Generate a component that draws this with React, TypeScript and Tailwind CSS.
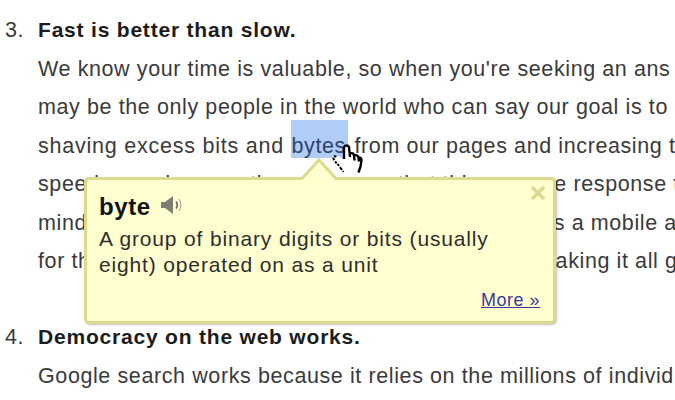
import React from 'react';

const FIRST_ITEM = [
  "We know your time is valuable, so when you're seeking an ans",
  'may be the only people in the world who can say our goal is to',
  null,
  'speed records many times over, so that this average response t',
  "mind with each new product we release, whether it's a mobile a",
  'for the modern web. And we continue working on making it all g',
];

const Line: React.FC<{ children: React.ReactNode }> = ({ children }) => (
  <p className="h-[38.4px] leading-[38.4px] whitespace-nowrap">{children}</p>
);

const Speaker = () => (
  <svg width="24" height="20" viewBox="0 0 24 20" className="ml-[9px] mt-[-3px]">
    <path d="M1 7h4l8-6v18l-8-6H1z" fill="#7d7d74" />
    <path d="M16 6.500c1.500 2 1.500 5 0 7" fill="none" stroke="#5f5f58" strokeWidth="1.500" />
    <path d="M19 4c2.500 3.500 2.500 8.500 0 12" fill="none" stroke="#a8a89c" strokeWidth="1.200" />
  </svg>
);

const HandCursor = () => (
  <svg width="32" height="32" viewBox="0 0 32 32" className="absolute left-[332px] top-[142px]">
    <path d="M12 17V5c1-2 4-2 5 0l1 6 4 1 4 2 3 2 1 3-1 5-2 6H12L2 15l4-1z" fill="#fff" />
    <path d="M2 14l3 1M1 16l4 6M5.500 22l3 4M8.500 26l3 4" stroke="#000" strokeWidth="2" strokeDasharray="2.500 1.500" fill="none" />
    <path
      d="M12 17V5c1-2 4-2 5 0l1 10M18 11.500c2-1 4 0 4 2l.5 5M22 13.500c2-1 4 0 4.500 2l.5 4M26.500 15.500c2 0 3 1 3 3l-1 6-2 6"
      stroke="#000"
      strokeWidth="2.400"
      fill="none"
    />
  </svg>
);

const Popup = () => (
  <div className="absolute left-[84px] top-[177px] w-[472px] h-[147px] rounded-[5px] border-[3px] border-[#dfd98d] bg-[#ffffcf] shadow-[1px_1px_2px_rgba(0,0,0,0.25)] text-[#2e2e2e]">
    <svg width="46" height="23" viewBox="0 0 46 23" className="absolute left-[209px] top-[-22px]">
      <path d="M6 20.500L23 2l17 18.500V23H6z" fill="#ffffcf" />
      <path d="M0 20.500h6L23 2l17 18.500h6" fill="none" stroke="#dfd98d" strokeWidth="3" />
    </svg>
    <div className="flex items-center pl-[12px] pt-[12px] h-[41px]">
      <span className="text-[24px] leading-[28px] font-bold text-[#111] tracking-[0.6px]">byte</span>
      <Speaker />
    </div>
    <p className="pl-[12px] mt-[5px] text-[21px] leading-[26px] tracking-[0.85px]">
      A group of binary digits or bits (usually
      <br />
      eight) operated on as a unit
    </p>
    <svg width="16" height="16" viewBox="0 0 16 16" className="absolute right-[7px] top-[5px]">
      <path d="M2 2l12 12M14 2L2 14" stroke="#dfd98d" strokeWidth="3.500" />
    </svg>
    <a className="absolute right-[13px] bottom-[11px] text-[18px] leading-[20px] tracking-[0.5px] text-[#3a3a9e] underline">
      More »
    </a>
  </div>
);

export default function App() {
  return (
    <div className="relative w-[675px] h-[400px] overflow-hidden bg-white font-['Liberation_Sans',Arial,sans-serif] text-[21.5px] text-[#3a3a3a] tracking-[0.6px]">
      <div className="flex pt-[11px]">
        <span className="w-[38px] pl-[5px] shrink-0 leading-[38.4px] tracking-[0.5px]">3.</span>
        <div>
          <p className="h-[39px] leading-[38.4px] text-[21px] font-bold text-[#1c1c1c] tracking-[0.8px]">Fast is better than slow.</p>
          {FIRST_ITEM.map((text, i) =>
            text === null ? (
              <Line key={i}>
                <span className="tracking-[0.77px]">shaving excess bits and</span> <span className="pl-[1px] pr-[2px] bg-[#b0cdf8] pt-[14px] pb-[0px] text-[#2f4468]">bytes</span> from our pages and increasing t
              </Line>
            ) : (
              <Line key={i}>{text}</Line>
            ),
          )}
        </div>
      </div>
      <div className="flex mt-[38px]">
        <span className="w-[38px] pl-[5px] shrink-0 leading-[38.4px] tracking-[0.5px]">4.</span>
        <div>
          <p className="h-[38.4px] leading-[38.4px] text-[21px] font-bold text-[#1c1c1c] tracking-[0.8px]">Democracy on the web works.</p>
          <Line>Google search works because it relies on the millions of individ</Line>
        </div>
      </div>
      <Popup />
      <HandCursor />
    </div>
  );
}
